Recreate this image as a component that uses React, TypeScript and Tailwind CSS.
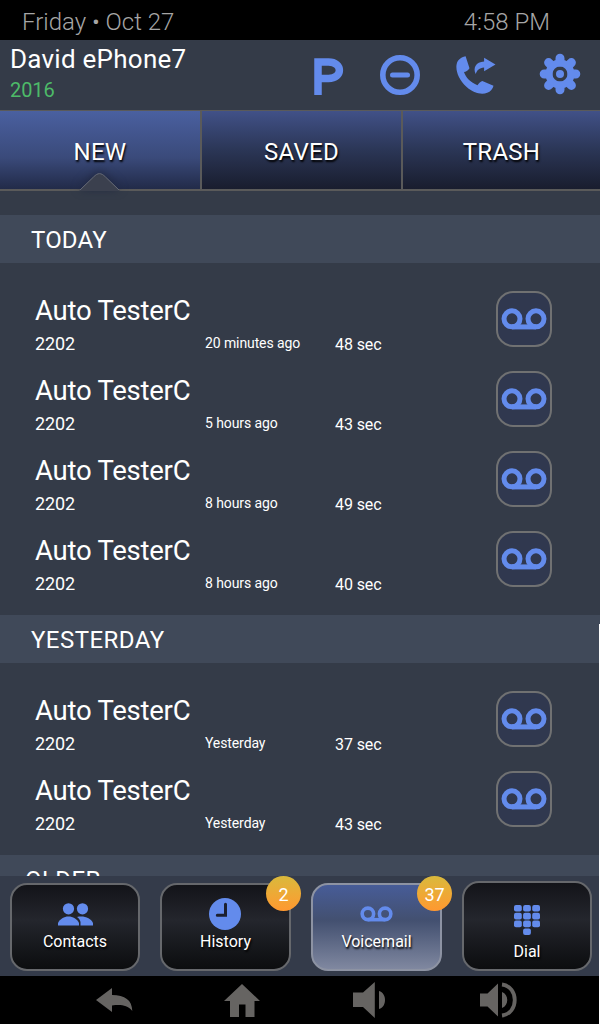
import React from "react";

type Message = { name: string; ext: string; when: string; length: string };

const today: Message[] = [
  { name: "Auto TesterC", ext: "2202", when: "20 minutes ago", length: "48 sec" },
  { name: "Auto TesterC", ext: "2202", when: "5 hours ago", length: "43 sec" },
  { name: "Auto TesterC", ext: "2202", when: "8 hours ago", length: "49 sec" },
  { name: "Auto TesterC", ext: "2202", when: "8 hours ago", length: "40 sec" },
];

const yesterday: Message[] = [
  { name: "Auto TesterC", ext: "2202", when: "Yesterday", length: "37 sec" },
  { name: "Auto TesterC", ext: "2202", when: "Yesterday", length: "43 sec" },
];

function Tape({ className }: { className: string }) {
  return (
    <svg viewBox="0 0 46 22" className={className} fill="none" stroke="#638bec" strokeWidth="5">
      <circle cx="11" cy="10.8" r="8" />
      <circle cx="35" cy="10.8" r="8" />
      <path d="M11 18.9H35" />
    </svg>
  );
}

function ForwardCall() {
  return (
    <svg viewBox="0 0 40 38" className="h-[38px] w-10" fill="#638bec">
      <path d="M2.4 4.2C4.5 2 7 .6 9.6.3L13.5 12.2C11.6 14.8 10 15.6 8 16.1C9.7 21.5 14.7 26.8 21.5 29.2C22.6 27.5 24.2 26.2 26.3 25.1L37.5 29.7C36.8 33 34.5 35.5 31.2 36.8C26 38.8 17.5 37.5 10.4 30.8C3.2 24-.3 15.5.5 9C.8 7 1.4 5.4 2.4 4.2Z" />
      <path d="M28.1 1.8 39.5 8.4 28.1 15.2V11.4C23.4 11.8 21 14 19.7 18C16.8 11.7 19.7 6.2 28.1 5.5Z" />
    </svg>
  );
}

function Gear() {
  return (
    <svg viewBox="-21 -21 42 42" className="size-[42px]">
      <g stroke="#638bec" strokeWidth="9" strokeLinecap="round">
        <path d="M0-15.8V-12M0 15.8V12M-15.8 0H-12M15.8 0H12M-11.4-11.4-9-9M11.4-11.4 9-9M-11.4 11.4-9 9M11.4 11.4 9 9" />
      </g>
      <circle r="11" fill="none" stroke="#638bec" strokeWidth="7" />
      <circle r="4" fill="#638bec" />
    </svg>
  );
}

function Tab({ label, active, className }: { label: string; active?: boolean; className: string }) {
  return (
    <div
      className={`${className} ${
        active
          ? "relative flex h-[78px] justify-center bg-linear-to-b from-[#4a60a0] via-[#3a4a7a] via-60% to-[#222b49] pt-[25px]"
          : "relative flex h-[78px] justify-center border-l-2 border-[#5a5a5a] bg-linear-to-b from-[#415188] via-[#2b3656] via-50% to-[#191d2e] pt-[25px]"
      }`}
    >
      <span className="h-8 text-[24px] leading-8 tracking-[0.25px] text-white [text-shadow:1px_2px_2px_#000]">
        {label}
      </span>
      {active && (
        <svg viewBox="0 0 60 30" className="absolute bottom-[-3px] left-[70px] h-[30px] w-[60px] overflow-visible">
          <path
            d="M9 29 23.5 15C28 10.5 31 10.5 35.5 15L50 29Z"
            fill="#3b404e"
            className="drop-shadow-[0_-2px_5px_#1f2740]"
          />
          <path d="M10 28 23.5 15C28 10.5 31 10.5 35.5 15L49 28" fill="none" stroke="#686c78" />
        </svg>
      )}
    </div>
  );
}

function Band({ label, className }: { label: string; className: string }) {
  return (
    <h2 className={`h-12 bg-[#404959] text-[24px] leading-[50px] font-normal text-white ${className}`}>{label}</h2>
  );
}

function Rows({ items }: { items: Message[] }) {
  return (
    <div className="py-4">
      {items.map((m, i) => (
        <div key={i} className="flex h-20 justify-between pr-12 pl-[35px] text-white">
          <div className="pt-4">
            <div className="h-8 text-[27.5px] leading-8 tracking-[-0.25px]">{m.name}</div>
            <div className="flex h-8 leading-8">
              <span className="w-[170px] pt-px text-[18px] tracking-[-0.1px]">{m.ext}</span>
              <span className="w-[130px] text-[14px] tracking-[-0.1px]">{m.when}</span>
              <span className="pt-0.5 text-[16px] tracking-[-0.1px]">{m.length}</span>
            </div>
          </div>
          <div className="mt-3 flex size-14 items-center justify-center rounded-[17px] border-2 border-[#707172] bg-[#30384f]">
            <Tape className="h-[22px] w-[46px]" />
          </div>
        </div>
      ))}
    </div>
  );
}

function Badge({ value }: { value: string }) {
  return (
    <span className="absolute -top-[9px] -right-3 flex size-[35px] items-center justify-center rounded-full bg-linear-to-b from-[#d9b93c] to-[#ff9830] pt-0.5 text-[18px] text-white">
      {value}
    </span>
  );
}

const keyBase = "relative flex flex-col items-center rounded-[17px] border-2 text-[16px] text-white";
const keyDark = "border-[#66686c] bg-linear-to-b from-[#131419] via-[#24262d] via-42% to-[#0c0d0f]";
const keyLit = "border-[#8d93a3] bg-linear-to-b from-[#475c98] via-[#435070] via-42% to-[#8088a0]";
const keyText = "leading-5 [text-shadow:1px_2px_2px_#000]";

export default function App() {
  return (
    <div className="relative flex h-[1024px] w-[600px] flex-col overflow-hidden bg-[#343b48] font-[Roboto,sans-serif]">
      <div className="flex h-10 shrink-0 justify-between bg-black pr-[50px] pl-[22px] text-[24px] leading-[44px] font-light text-[#a6a6a6]">
        <span>Friday • Oct 27</span>
        <span>4:58 PM</span>
      </div>

      <header className="flex h-[70px] shrink-0 justify-between pr-[19px] pl-2.5">
        <div>
          <div className="h-[38px] text-[26px] leading-[38px] tracking-[0.25px] text-white">David ePhone7</div>
          <div className="h-6 text-[20px] leading-6 tracking-[-0.1px] text-[#4dba68]">2016</div>
        </div>
        <div className="flex items-start">
          <svg viewBox="0 0 30 38" className="mt-[18px] mr-[36px] h-[38px] w-[30px]">
            <path d="M4 37V4H14.5C29 4 29 20.5 14.5 20.5H4" fill="none" stroke="#638bec" strokeWidth="7.5" />
          </svg>
          <svg viewBox="0 0 40 40" className="mt-[15px] mr-[36px] size-10" fill="none" stroke="#638bec" strokeWidth="5.6">
            <circle cx="20" cy="20" r="17.2" />
            <path d="M12.5 20H27.5" strokeWidth="5" strokeLinecap="round" />
          </svg>
          <div className="mt-4 mr-[43px]">
            <ForwardCall />
          </div>
          <div className="mt-[13px]">
            <Gear />
          </div>
        </div>
      </header>

      <nav className="z-10 flex h-[81px] shrink-0 border-t border-b-2 border-[#5a5a5a]">
        <Tab label="NEW" active className="w-[200px]" />
        <Tab label="SAVED" className="w-[201px]" />
        <Tab label="TRASH" className="w-[199px]" />
      </nav>

      <main className="h-[685px] shrink-0 overflow-hidden pt-6">
        <Band label="TODAY" className="pl-[31px] tracking-[0.15px]" />
        <Rows items={today} />
        <Band label="YESTERDAY" className="pl-[31px] tracking-[0.45px]" />
        <Rows items={yesterday} />
        <Band label="OLDER" className="pl-[25px] tracking-[0.4px]" />
      </main>

      <nav className="flex h-[100px] shrink-0 items-end justify-between bg-[#343b4a] pr-2 pb-[5px] pl-2.5">
        <div className={`${keyBase} ${keyDark} h-[88px] w-[130px]`}>
          <svg viewBox="0 0 35 23" className="mt-[18px] h-[23px] w-[35px]" fill="#638bec">
            <circle cx="10.5" cy="5.8" r="5.6" />
            <circle cx="24.5" cy="5.8" r="5.6" />
            <path d="M0 22.5V20C2 16 6 13.500 10.500 13.500S19 16 21 20V22.500Z" />
            <path d="M19 14C26 12.500 33 15 35 20V22.500H22.500V19C22 16.500 21 15.500 19 14Z" />
          </svg>
          <span className={`${keyText} mt-[6px]`}>Contacts</span>
        </div>
        <div className={`${keyBase} ${keyDark} h-[88px] w-[131px]`}>
          <svg viewBox="0 0 32 32" className="mt-[13px] mr-px size-8">
            <circle cx="16" cy="16" r="16" fill="#638bec" />
            <path d="M16.5 6.3V17.3H8.3" fill="none" stroke="#1c2030" strokeWidth="3" strokeLinecap="round" />
          </svg>
          <span className={`${keyText} mt-[2px]`}>History</span>
          <Badge value="2" />
        </div>
        <div className={`${keyBase} ${keyLit} h-[88px] w-[131px]`}>
          <Tape className="mt-[21px] h-4 w-[33px]" />
          <span className={`${keyText} mt-[10px]`}>Voicemail</span>
          <Badge value="37" />
        </div>
        <div className={`${keyBase} ${keyDark} h-[90px] w-[130px]`}>
          <svg viewBox="0 0 26 30" className="mt-[22px] h-[30px] w-[26px]" fill="#638bec">
            {[0, 1, 2].map((r) =>
              [0, 1, 2].map((c) => <rect key={`${r}${c}`} x={c * 9.1} y={r * 7.8} width="7.8" height="6.6" rx="2" />)
            )}
            <rect x="9.1" y="23.4" width="7.8" height="6.6" rx="2" />
          </svg>
          <span className={`${keyText} mt-[7px]`}>Dial</span>
        </div>
      </nav>

      <footer className="h-12 shrink-0 bg-black">
        <svg viewBox="0 976 600 48" className="h-12 w-[600px]" fill="#666462">
          <path d="M96 1000 112 988V995C125 995 132 1000 132.3 1011C127 1005 121 1004.5 112 1005.5V1012Z" />
          <path d="M242 984 260 1001H254.5V1017H245.5V1004.5H239V1017H230V1001H224Z" />
          <path d="M353 992.5H363L374.8 982V1018L363 1007H353ZM379 991C387 993 387 1007 379 1009Z" />
          <path d="M480 993.5H487.5L498 983.5V1016.5L487.5 1006.5H480ZM502 992C509 994.5 509 1005.5 502 1008Z" />
          <path d="M502 984.5C519 986.5 519 1013.5 502 1015.5" fill="none" stroke="#666462" strokeWidth="3.8" />
        </svg>
      </footer>

      <div className="absolute top-[624px] right-0 z-20 h-[400px] w-px bg-white" />
    </div>
  );
}
